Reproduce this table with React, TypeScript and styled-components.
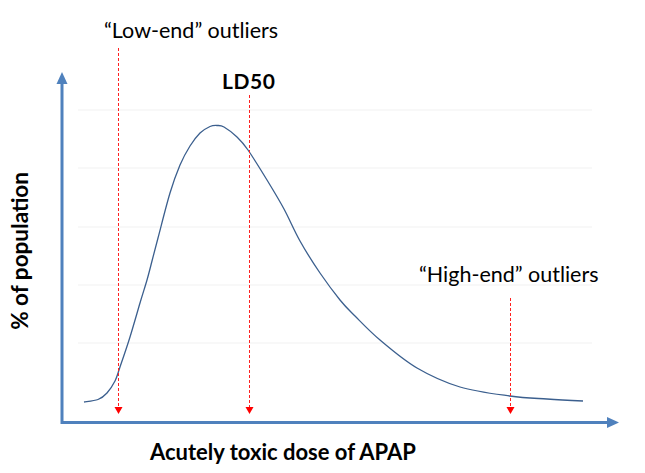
import React from 'react';
import styled, {createGlobalStyle} from 'styled-components';

/* ====== Data ====== */

const curvePoints: [number, number][] = [
  [84, 402], [98, 399.5], [107, 393], [115, 381], [120, 367], [130, 337],
  [140, 303], [147, 280], [152, 261], [158, 238], [170, 193], [180, 165],
  [190, 146], [200, 133], [210, 126.5], [217, 125.5], [224, 127], [237, 137],
  [248, 150], [267, 180], [284, 209], [300, 241], [320, 273], [340, 300],
  [355, 316], [380, 340], [417, 368], [460, 387], [510, 396], [547, 399],
  [583, 401],
];

const gridLines = [110, 168, 227, 285, 343];

const markers = [
  { x: 118, top: 48 },
  { x: 249, top: 95 },
  { x: 510, top: 298 },
];

const ARROW_TIP = 414;

const smoothPath = (pts: [number, number][]) => {
  let d = `M${pts[0][0]},${pts[0][1]}`;
  for (let i = 0; i < pts.length - 1; i++) {
    const p0 = pts[i - 1] || pts[i];
    const p1 = pts[i];
    const p2 = pts[i + 1];
    const p3 = pts[i + 2] || p2;
    const c1x = p1[0] + (p2[0] - p0[0]) / 6;
    const c1y = p1[1] + (p2[1] - p0[1]) / 6;
    const c2x = p2[0] - (p3[0] - p1[0]) / 6;
    const c2y = p2[1] - (p3[1] - p1[1]) / 6;
    d += ` C${c1x.toFixed(1)},${c1y.toFixed(1)} ${c2x.toFixed(1)},${c2y.toFixed(1)} ${p2[0]},${p2[1]}`;
  }
  return d;
};

/* ====== Containers ====== */

const GlobalStyle = createGlobalStyle`
  html, body {
    margin: 0;
    padding: 0;
    background: #ffffff;
  }
`

const Figure = styled.div`
  display: grid;
  grid-template-columns: 40px 1fr;
  grid-template-rows: 432px 1fr;
  width: 645px;
  height: 473px;
  background: #ffffff;
  font-family: Lato, "Open Sans", sans-serif;
  color: #000000;
  overflow: hidden;
`

const YTitleCell = styled.div`
  grid-row: 1;
  grid-column: 1;
  display: flex;
  align-items: center;
  justify-content: center;
  padding-top: 70px;
`

const XTitleCell = styled.div`
  grid-row: 2;
  grid-column: 2;
  padding: 9px 0 0 110px;
`

/* ====== Text Elements ====== */

const YTitle = styled.span`
  writing-mode: vertical-rl;
  transform: rotate(180deg);
  font-size: 22.5px;
  font-weight: 700;
  line-height: 1;
  white-space: nowrap;
`

const XTitle = styled.span`
  font-size: 22px;
  font-weight: 700;
  line-height: 1;
  white-space: nowrap;
`

const ChartLabel = styled.text<{ $bold?: boolean }>`
  font-family: Lato, "Open Sans", sans-serif;
  font-size: ${p => (p.$bold ? '21px' : '21.5px')};
  font-weight: ${p => (p.$bold ? 700 : 400)};
  letter-spacing: ${p => (p.$bold ? '0.6px' : '0')};
  fill: #000000;
`

/* ====== Chart ====== */

const Chart = () => (
  <svg width="605" height="432" viewBox="40 0 605 432">
    {gridLines.map(y => (
      <line key={y} x1={78} x2={592} y1={y} y2={y} stroke="#f1f1f1" strokeWidth={1} />
    ))}

    <path d={smoothPath(curvePoints)} fill="none" stroke="#3b5f8e" strokeWidth={1.3} />

    {markers.map(m => (
      <g key={m.x}>
        <line
          x1={m.x + 0.5}
          x2={m.x + 0.5}
          y1={m.top}
          y2={ARROW_TIP - 6}
          stroke="#ff2020"
          strokeWidth={1}
          strokeDasharray="3 2"
        />
        <polygon
          points={`${m.x - 3.5},${ARROW_TIP - 7} ${m.x + 4.5},${ARROW_TIP - 7} ${m.x + 0.5},${ARROW_TIP}`}
          fill="#ff0000"
        />
      </g>
    ))}

    <polyline points="62,84 62,422.5 608,422.5" fill="none" stroke="#4f81bd" strokeWidth={3} />
    <polygon points="56.5,84 67.5,84 62,72" fill="#4f81bd" />
    <polygon points="607,417 607,428 619,422.5" fill="#4f81bd" />

    <ChartLabel x={104} y={38}>“Low-end” outliers</ChartLabel>
    <ChartLabel x={222} y={89} $bold>LD50</ChartLabel>
    <ChartLabel x={419} y={282}>“High-end” outliers</ChartLabel>
  </svg>
);

/* ====== Components ====== */

const App = () => (
  <>
    <GlobalStyle />
    <Figure>
      <YTitleCell>
        <YTitle>% of population</YTitle>
      </YTitleCell>
      <Chart />
      <XTitleCell>
        <XTitle>Acutely toxic dose of APAP</XTitle>
      </XTitleCell>
    </Figure>
  </>
);

export default App;
